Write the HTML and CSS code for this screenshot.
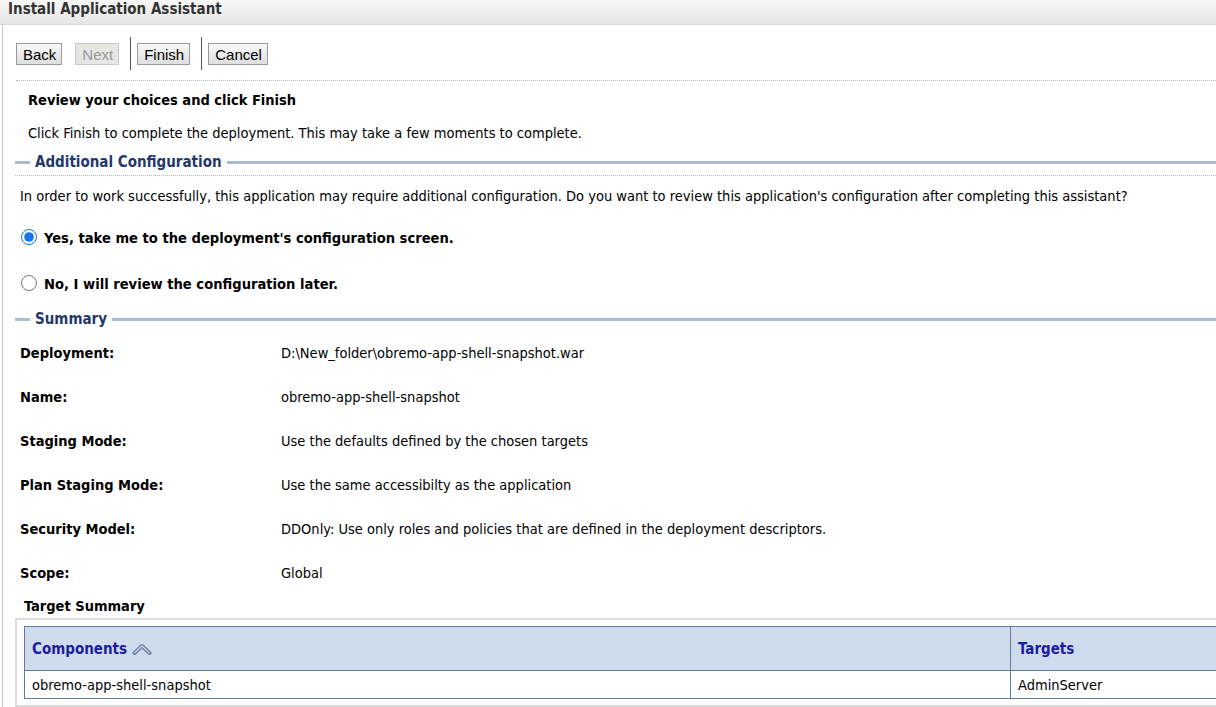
FILE: index.html
```html
<!DOCTYPE html>
<html lang="en">

<head>
    <meta charset="UTF-8">
    <title>Install Application Assistant</title>
    <link rel="stylesheet" href="styles.css">
</head>

<body>

    <div class="header">Install Application Assistant</div>

    <div class="content">
        <div class="toolbar">
            <button class="btn">Back</button>
            <button class="btn btn-next" disabled>Next</button>
            <span class="sep"></span>
            <button class="btn btn-finish">Finish</button>
            <span class="sep"></span>
            <button class="btn">Cancel</button>
        </div>

        <div class="page-title">Review your choices and click Finish</div>
        <div class="intro">Click Finish to complete the deployment. This may take a few moments to complete.</div>

        <div class="section section-dotted"><span class="section-label">Additional Configuration</span></div>
        <p class="question">In order to work successfully, this application may require additional configuration. Do you want to review this application's configuration after completing this assistant?</p>

        <label class="radio radio-yes"><input type="radio" name="config" checked> Yes, take me to the deployment's configuration screen.</label>
        <label class="radio radio-no"><input type="radio" name="config"> No, I will review the configuration later.</label>

        <div class="section section-summary"><span class="section-label">Summary</span></div>

        <div class="summary">
            <div class="key">Deployment:</div>
            <div class="val">D:\New_folder\obremo-app-shell-snapshot.war</div>
            <div class="key">Name:</div>
            <div class="val">obremo-app-shell-snapshot</div>
            <div class="key">Staging Mode:</div>
            <div class="val">Use the defaults defined by the chosen targets</div>
            <div class="key">Plan Staging Mode:</div>
            <div class="val">Use the same accessibilty as the application</div>
            <div class="key">Security Model:</div>
            <div class="val">DDOnly: Use only roles and policies that are defined in the deployment descriptors.</div>
            <div class="key">Scope:</div>
            <div class="val">Global</div>
        </div>

        <div class="target-title">Target Summary</div>
        <div class="table-box">
            <table class="targets">
                <tr class="head">
                    <th class="col-comp">Components
                        <svg class="sort" width="20" height="12" viewBox="0 0 20 12">
                            <path d="M2.5 10 L10 3 L17.5 10" fill="none" stroke="#6f83a6" stroke-width="4" stroke-linejoin="round" stroke-linecap="round" />
                            <path d="M2.5 10 L10 3 L17.5 10" fill="none" stroke="#c9d3e2" stroke-width="1.3" />
                        </svg>
                    </th>
                    <th>Targets</th>
                </tr>
                <tr>
                    <td>obremo-app-shell-snapshot</td>
                    <td>AdminServer</td>
                </tr>
            </table>
        </div>
    </div>

</body>

</html>
```

FILE: styles.css
```css
body {
    margin: 0;
    font-family: "DejaVu Sans Condensed", "DejaVu Sans", sans-serif;
    font-size: 14.5px;
    color: #000;
    background: #fff;
    overflow: hidden;
}

.header {
    height: 25px;
    line-height: 19px;
    padding-left: 8px;
    box-sizing: border-box;
    font-weight: bold;
    font-size: 15px;
    color: #333;
    background: linear-gradient(#f7f7f7, #e6e6e6);
    border-bottom: 1px solid #d9d9d9;
}

.content {
    margin-left: 2px;
    border-left: 1px solid #c8c8c8;
    height: 682px;
}

.toolbar {
    display: flex;
    align-items: center;
    height: 55px;
    margin-left: 13px;
    border-bottom: 1px dotted #b8b8b8;
}

.btn {
    height: 22px;
    padding: 0 5px 0 6px;
    margin: 3px 13px 0 0;
    font-family: "Liberation Sans", Arial, sans-serif;
    font-size: 15px;
    color: #000;
    background: linear-gradient(#f8f8f8, #dedede);
    border: 1px solid #9a9a9a;
    border-radius: 0;
}

.btn-next {
    color: #9a9a9a;
    background: #e6e6e3;
    border-color: #c8c8c8;
    margin-right: 11px;
}

.btn-finish {
    margin-right: 11px;
}

.sep {
    width: 1px;
    height: 33px;
    background: #555;
    margin-right: 6px;
    margin-top: 2px;
}

.page-title {
    padding: 9px 0 0 25px;
    line-height: 20px;
    font-weight: bold;
}

.intro {
    margin-top: 13px;
    padding-left: 25px;
    line-height: 20px;
}

.section {
    display: flex;
    align-items: center;
    margin-left: 12px;
    line-height: 20px;
    font-weight: bold;
    font-size: 15px;
    color: #233869;
}

.section::before {
    content: "";
    width: 15px;
    height: 3px;
    background: #a9bcd4;
    margin-right: 5px;
}

.section::after {
    content: "";
    flex: 1;
    height: 3px;
    background: #a9bcd4;
    margin-left: 5px;
}

.section-dotted {
    margin-top: 9px;
    padding-bottom: 3px;
    border-bottom: 1px dotted #b8b8b8;
}

.question {
    margin: 10px 0 0 17px;
    line-height: 20px;
}

.radio {
    display: flex;
    align-items: center;
    margin-left: 17px;
    height: 20px;
    font-weight: bold;
    font-size: 14.6px;
}

.radio input {
    width: 16px;
    height: 16px;
    margin: 0 7px 0 1px;
    accent-color: #1a73e8;
}

.radio-yes {
    margin-top: 21px;
}

.radio-no {
    margin-top: 26px;
}

.section-summary {
    margin-top: 16px;
}

.summary {
    display: grid;
    grid-template-columns: 261px 1fr;
    grid-auto-rows: 44px;
    align-items: center;
    margin-top: 2px;
    padding-left: 17px;
}

.key {
    font-weight: bold;
}

.target-title {
    margin-top: 2px;
    padding-left: 21px;
    line-height: 18px;
    font-weight: bold;
}

.table-box {
    margin: 3px 0 0 12px;
    border: 2px solid #dcdcdc;
    border-right: none;
    padding: 6px 0 6px 7px;
}

.targets {
    width: 1200px;
    border-collapse: collapse;
    border: 1px solid #637a9c;
}

.targets th,
.targets td {
    border: 1px solid #637a9c;
    text-align: left;
    padding: 0 7px;
}

.targets th {
    height: 43px;
    background: #cfdcee;
    color: #1c1ca0;
    font-weight: bold;
    font-size: 15px;
}

.targets td {
    height: 27px;
}

.col-comp {
    width: 971px;
}

.sort {
    vertical-align: -1px;
}
```
